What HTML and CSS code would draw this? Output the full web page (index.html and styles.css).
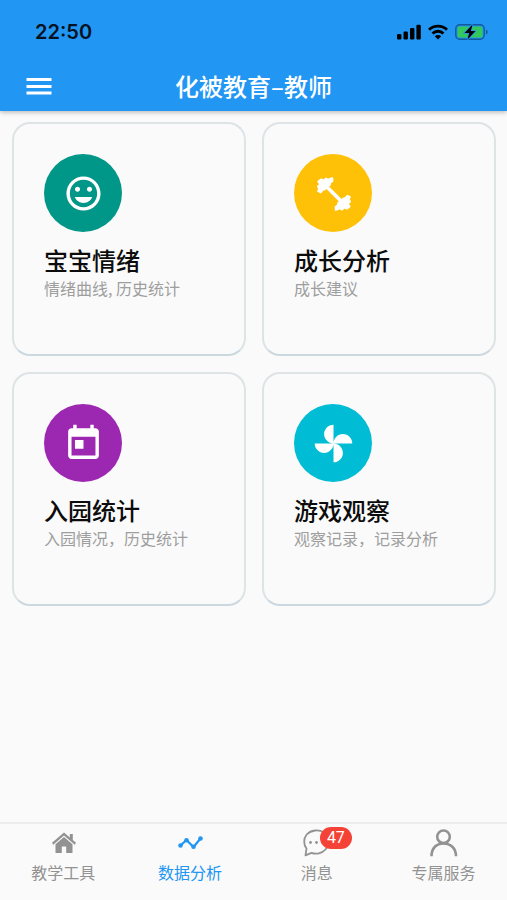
FILE: index.html
```html
<!DOCTYPE html>
<html lang="zh-CN">
<head>
<meta charset="utf-8">
<meta name="viewport" content="width=device-width, initial-scale=1">
<title>化被教育–教师</title>
<link rel="stylesheet" href="styles.css">
</head>
<body>
<header class="header">
  <div class="status">
    <time class="clock">22:50</time>
    <div class="status-icons">
      <svg width="24" height="16" viewBox="0 0 24 16" aria-hidden="true"><rect x="0" y="10" width="4.4" height="5.5" rx="1.2"/><rect x="6.5" y="7.5" width="4.4" height="8" rx="1.2"/><rect x="13" y="4" width="4.4" height="11.5" rx="1.2"/><rect x="19.4" y="0.8" width="4.4" height="14.7" rx="1.2"/></svg>
      <svg width="20" height="16" viewBox="0 0 20 16" aria-hidden="true"><g fill="none" stroke="#000" stroke-width="2.8"><path d="M1 5.8a12.8 12.8 0 0 1 18 0"/><path d="M4.5 9.5a7.8 7.8 0 0 1 11 0"/></g><path d="M10 15.5 6.8 12.3a4.5 4.5 0 0 1 6.4 0z"/></svg>
      <svg width="34" height="16" viewBox="0 0 34 16" aria-hidden="true"><rect x=".8" y=".8" width="28.4" height="14.4" rx="4" fill="none" stroke="#12599a" stroke-width="1.4"/><rect x="2.5" y="2.5" width="25" height="11" rx="2.2" fill="#34c759"/><path d="M31 5.5c2.2.8 2.2 4.2 0 5z" fill="#12599a"/><path d="M17.500 .5 9.500 9h4.700L12.500 15.500 20.500 7h-4.700z" stroke="#2196f3" stroke-width="1.600" paint-order="stroke"/></svg>
    </div>
  </div>
  <div class="appbar">
    <button class="menu" type="button" aria-label="菜单"><svg width="26" height="18" viewBox="0 0 26 18" aria-hidden="true"><path d="M.5 1h25v3H.5zM.5 8h25v3H.5zM.5 14.500h25v3H.5z"/></svg></button>
    <h1 class="title">化被教育–教师</h1>
  </div>
</header>

<main class="grid">
  <a class="card" href="#mood">
    <span class="disc teal"><svg viewBox="0 0 24 24" aria-hidden="true"><path d="M11.990 2C6.470 2 2 6.480 2 12s4.470 10 9.990 10C17.520 22 22 17.520 22 12S17.520 2 11.990 2zM12 20c-4.420 0-8-3.580-8-8s3.580-8 8-8 8 3.580 8 8-3.580 8-8 8zm3.500-9c.83 0 1.500-.67 1.500-1.500S16.330 8 15.500 8 14 8.670 14 9.500s.67 1.500 1.500 1.500zm-7 0c.83 0 1.500-.67 1.500-1.500S9.330 8 8.500 8 7 8.670 7 9.500 7.670 11 8.500 11zm3.500 6.500c2.330 0 4.310-1.460 5.110-3.500H6.890c.8 2.040 2.780 3.500 5.110 3.500z"/></svg></span>
    <h2 class="name">宝宝情绪</h2>
    <p class="note">情绪曲线, 历史统计</p>
  </a>
  <a class="card" href="#growth">
    <span class="disc amber"><svg viewBox="0 0 40 40" aria-hidden="true"><g stroke="#fff" stroke-linejoin="round"><path d="M12 12 29 29" stroke-width="3.600"/><path id="plate" stroke-width="1.800" d="M5 17.800 6 15 4.800 13.200 7 11.200 5.200 8.200 8 6.200 10.800 7.500 12.600 5.300 14.600 6.500 18.800 4.900 19 7.800 16.800 9.500 16.500 11.500 11.500 16 9.500 16.500 7.500 18.800z"/><use href="#plate" transform="rotate(180 20.500 20.500)"/></g></svg></span>
    <h2 class="name">成长分析</h2>
    <p class="note">成长建议</p>
  </a>
  <a class="card" href="#attendance">
    <span class="disc purple"><svg viewBox="0 0 24 24" aria-hidden="true"><path d="M19 3h-1V1h-2v2H8V1H6v2H5c-1.110 0-1.990.9-1.990 2L3 19c0 1.100.89 2 2 2h14c1.100 0 2-.9 2-2V5c0-1.100-.9-2-2-2zm0 16H5V8h14v11zM7 10h5v5H7z"/></svg></span>
    <h2 class="name">入园统计</h2>
    <p class="note">入园情况，历史统计</p>
  </a>
  <a class="card" href="#play">
    <span class="disc cyan"><svg viewBox="0 0 24 24" aria-hidden="true"><path d="M12 12c0-3 2.500-5.500 5.500-5.500S23 9 23 12H12zm0 0c0 3-2.500 5.500-5.500 5.500S1 15 1 12h11zm0 0c-3 0-5.500-2.500-5.500-5.500S9 1 12 1v11zm0 0c3 0 5.500 2.500 5.500 5.500S15 23 12 23V12z"/></svg></span>
    <h2 class="name">游戏观察</h2>
    <p class="note">观察记录，记录分析</p>
  </a>
</main>

<nav class="tabs">
  <a class="tab" href="#tools">
    <span class="tab-icon"><svg width="28" height="28" viewBox="0 0 28 28" aria-hidden="true"><path d="M15 3.500 3 13.800l1.300 1.900L15 6.600l10.700 9.100 1.300-1.900-3.200-2.800V5h-3v3.500z"/><path d="M15 8 6.500 15.300V24h6.300v-6.500h4.400V24h6.300v-8.700z"/></svg></span>
    <span>教学工具</span>
  </a>
  <a class="tab active" href="#data" aria-current="page">
    <span class="tab-icon"><svg width="28" height="28" viewBox="0 0 28 28" aria-hidden="true"><path d="M4.500 16.500 10.500 11 17.500 18 24.500 9.500" fill="none" stroke="currentColor" stroke-width="2.200"/><circle cx="4.500" cy="16.500" r="2.300"/><circle cx="10.500" cy="11.300" r="2.300"/><circle cx="17.500" cy="17.800" r="2.300"/><circle cx="24.500" cy="9.500" r="2.300"/></svg></span>
    <span>数据分析</span>
  </a>
  <a class="tab" href="#messages">
    <span class="tab-icon"><svg width="28" height="28" viewBox="0 0 28 28" aria-hidden="true"><path d="M2.500 26.300 3.500 19.500C.4 15.500.4 9.500 3.700 5.500 8 .8 16 .2 21 3.500c5.500 4 5.800 12 1.500 17-3.500 4-9.500 5-14 3.300z" fill="none" stroke="currentColor" stroke-width="1.800" stroke-linejoin="round"/><circle cx="7.500" cy="13.500" r="1.400"/><circle cx="13.500" cy="13.500" r="1.400"/><circle cx="19.500" cy="13.500" r="1.400"/></svg><span class="badge">47</span></span>
    <span>消息</span>
  </a>
  <a class="tab" href="#service">
    <span class="tab-icon"><svg width="28" height="28" viewBox="0 0 28 28" aria-hidden="true"><g fill="none" stroke="currentColor" stroke-width="2.600"><circle cx="13.500" cy="7.800" r="6.300"/><path d="M1.500 27.200C1.500 19 6.500 14.500 13.500 14.500S26 19 26 27.200"/></g></svg></span>
    <span>专属服务</span>
  </a>
</nav>
</body>
</html>
```
FILE: styles.css
```css
* {
  box-sizing: border-box;
}

body {
  margin: 0;
  min-height: 100vh;
  display: flex;
  flex-direction: column;
  background: #fafafa;
  color: #0c0c0c;
  font-family: "Noto Sans CJK SC", sans-serif;
}

a {
  color: inherit;
  text-decoration: none;
}

h1, h2, p {
  margin: 0;
}

.header {
  background: #2196f3;
  box-shadow: 0 1px 5px rgba(0, 0, 0, 0.3);
}

.status {
  display: flex;
  align-items: center;
  justify-content: space-between;
  height: 63px;
  padding: 0 18px 0 35px;
}

.clock {
  font: 600 20px/24px Inter, sans-serif;
  color: #06121f;
}

.status-icons {
  display: flex;
  gap: 7px;
}

.appbar {
  display: grid;
  grid-template-columns: 52px 1fr 52px;
  align-items: center;
  height: 48px;
  padding-bottom: 2px;
}

.menu {
  display: flex;
  justify-content: flex-end;
  padding: 0;
  border: 0;
  background: none;
  fill: #fff;
}

.title {
  color: #fff;
  font-size: 24px;
  font-weight: 500;
  line-height: 36px;
  text-align: center;
}

.grid {
  flex: 1;
  display: grid;
  grid-template-columns: 1fr 1fr;
  align-content: start;
  gap: 16px;
  padding: 11px 11px 16px 12px;
}

.card {
  aspect-ratio: 1;
  padding: 30px;
  border: 2px solid #dee3e6;
  border-bottom-color: #ccd8e0;
  border-radius: 18px;
}

.disc {
  display: flex;
  align-items: center;
  justify-content: center;
  width: 78px;
  height: 78px;
  border-radius: 50%;
}

.disc svg {
  width: 41px;
  height: 41px;
  fill: #fff;
}

.teal { background: #009688; }
.amber { background: #ffc107; }
.purple { background: #9c27b0; }
.cyan { background: #00bcd4; }

.name {
  margin-top: 12px;
  font-size: 24px;
  font-weight: 500;
  line-height: 32px;
}

.note {
  color: #9e9e9e;
  font-size: 16px;
  font-weight: 400;
  line-height: 24px;
}

.tabs {
  display: grid;
  grid-template-columns: repeat(4, 1fr);
  height: 78px;
  border-top: 2px solid #ececec;
}

.tab {
  display: flex;
  flex-direction: column;
  align-items: center;
  gap: 3px;
  padding-top: 5px;
  color: #929292;
  font-size: 16px;
  line-height: 24px;
}

.tab svg {
  display: block;
  fill: currentColor;
}

.active {
  color: #2196f3;
}

.tab-icon {
  position: relative;
}

.badge {
  position: absolute;
  top: -2px;
  left: 17px;
  width: 32px;
  border-radius: 11px;
  background: #f44336;
  color: #fff;
  font: 16px/22px Roboto, sans-serif;
  text-align: center;
}
```
